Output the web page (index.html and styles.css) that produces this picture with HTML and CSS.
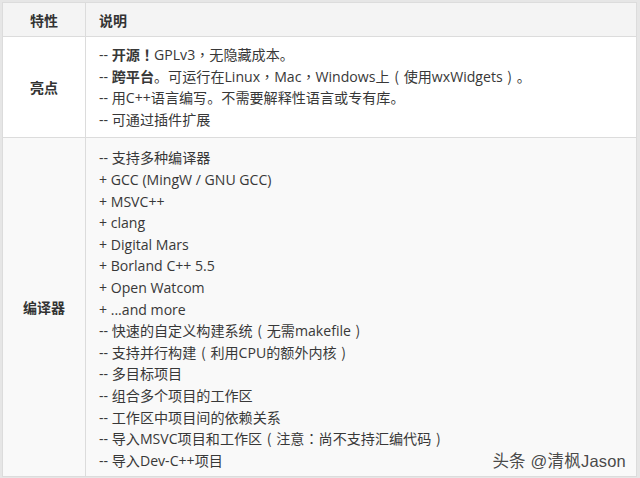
FILE: index.html
```html
<!DOCTYPE html>
<html>
<head>
<meta charset="utf-8">
<link rel="stylesheet" href="styles.css">
</head>
<body>
<div class="frame">
<table class="tbl">
  <thead>
    <tr class="head">
      <th class="c1">特性</th>
      <th class="c2">说明</th>
    </tr>
  </thead>
  <tbody>
    <tr class="row1">
      <td class="c1 label">亮点</td>
      <td class="c2">
        <div class="line">-- <b>开源<span class="cp">！</span></b>GPLv3<span class="cp">，</span>无隐藏成本。</div>
        <div class="line">-- <b>跨平台</b>。可运行在Linux<span class="cp">，</span>Mac<span class="cp">，</span>Windows上<span class="pa">(</span>使用wxWidgets<span class="pa">)</span>。</div>
        <div class="line">-- 用C++语言编写。不需要解释性语言或专有库。</div>
        <div class="line">-- 可通过插件扩展</div>
      </td>
    </tr>
    <tr class="row2">
      <td class="c1 label">编译器</td>
      <td class="c2">
        <div class="line">-- 支持多种编译器</div>
        <div class="line">+ GCC (MingW / GNU GCC)</div>
        <div class="line">+ MSVC++</div>
        <div class="line">+ clang</div>
        <div class="line">+ Digital Mars</div>
        <div class="line">+ Borland C++ 5.5</div>
        <div class="line">+ Open Watcom</div>
        <div class="line">+ ...and more</div>
        <div class="line">-- 快速的自定义构建系统<span class="pa">(</span>无需makefile<span class="pa">)</span></div>
        <div class="line">-- 支持并行构建<span class="pa">(</span>利用CPU的额外内核<span class="pa">)</span></div>
        <div class="line">-- 多目标项目</div>
        <div class="line">-- 组合多个项目的工作区</div>
        <div class="line">-- 工作区中项目间的依赖关系</div>
        <div class="line">-- 导入MSVC项目和工作区<span class="pa">(</span>注意<span class="cp">：</span>尚不支持汇编代码<span class="pa">)</span></div>
        <div class="line">-- 导入Dev-C++项目</div>
      </td>
    </tr>
  </tbody>
</table>
<div class="watermark">头条 @清枫Jason</div>
</div>
</body>
</html>
```
FILE: styles.css
```css
html, body {
  margin: 0;
  padding: 0;
  background: #e6e6e6;
}
.frame {
  position: relative;
  width: 640px;
  height: 478px;
  padding: 2px 2px 0 2px;
  box-sizing: border-box;
}
.tbl {
  width: 635px;
  border-collapse: collapse;
  font-family: "Open Sans", "Noto Sans CJK SC", sans-serif;
  font-size: 14.1px;
  color: #383838;
  table-layout: fixed;
}
.tbl th, .tbl td {
  border: 1px solid #dcdcdc;
  padding: 0;
}
.c1 { width: 82px; text-align: center; }
.head { height: 34px; background: #f4f4f4; }
.head th { font-weight: bold; font-size: 14px; color: #333; }
.head .c2 { text-align: left; padding-left: 13px; }
.label { font-weight: bold; font-size: 14px; color: #333; }
.row1 { background: #ffffff; height: 100px; }
.row2 { background: #f9f9f9; height: 339px; }
.tbl td.c2 { padding: 7px 0 7px 13px; vertical-align: middle; }
.row2 td.c2 { padding-top: 9px; padding-bottom: 5px; }
.line { line-height: 21.6px; white-space: nowrap; }
.line b { font-weight: bold; }
.cp { font-family: "Noto Sans CJK TC", sans-serif; }
.pa {
  display: inline-block;
  width: 1em;
  text-align: center;
  font-family: "Noto Sans CJK SC", sans-serif;
}
.watermark {
  position: absolute;
  right: 14px;
  bottom: 6px;
  font-family: "Liberation Sans", "Noto Sans CJK SC", sans-serif;
  font-size: 16.5px;
  color: #4a4a4a;
  text-shadow: 0 0 2px #fff, 0 0 1px #fff;
  letter-spacing: 0.2px;
}
```
